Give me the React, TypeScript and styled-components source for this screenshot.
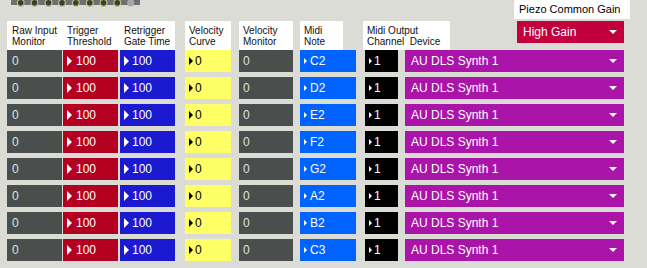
import React from "react";
import styled, { createGlobalStyle } from "styled-components";

const GlobalStyle = createGlobalStyle`
  html, body { margin: 0; padding: 0; background: #dcdcd6; }
  body { font-family: "Liberation Sans", Arial, Helvetica, sans-serif; }
`;

const Page = styled.div`
  width: 647px;
  height: 268px;
  overflow: hidden;
  background: #dcdcd6;
  display: flex;
  flex-direction: column;
`;

const TopBar = styled.div`
  display: flex;
  align-items: flex-start;
  height: 21px;
`;

const LedStrip = styled.div`
  margin-left: 11px;
  width: 129px;
  height: 7px;
  flex-shrink: 0;
  display: flex;
`;

const PiezoLabel = styled.div`
  margin-left: auto;
  margin-right: 17px;
  width: 116px;
  height: 19px;
  background: #ffffff;
  color: #000;
  font-size: 11px;
  line-height: 19px;
  padding-left: 5px;
  box-sizing: border-box;
`;

const HeaderRow = styled.div`
  display: flex;
  align-items: flex-start;
  height: 29px;
`;

const LabelBox = styled.div<{ $ml: number }>`
  margin-left: ${(p) => p.$ml}px;
  height: 29px;
  background: #ffffff;
  display: flex;
`;

const Label = styled.div<{ $w: number; $pl?: number }>`
  width: ${(p) => p.$w}px;
  padding-left: ${(p) => p.$pl ?? 5}px;
  padding-top: 4px;
  box-sizing: border-box;
  font-size: 10px;
  line-height: 11px;
  color: #111;
  white-space: pre;
`;

const GainSelect = styled.div`
  margin-left: auto;
  margin-right: 23px;
  width: 107px;
  height: 22px;
  background: #c2003e;
  color: #fff;
  font-size: 12px;
  display: flex;
  align-items: center;
  padding-left: 6px;
  padding-right: 7px;
  box-sizing: border-box;
`;

const Rows = styled.div`
  display: flex;
  flex-direction: column;
  gap: 5px;
`;

const Row = styled.div`
  display: flex;
  height: 22px;
`;

const Cell = styled.div<{ $w: number; $ml: number; $bg: string; $fg: string; $pl: number; $pr?: number }>`
  width: ${(p) => p.$w}px;
  margin-left: ${(p) => p.$ml}px;
  height: 22px;
  background: ${(p) => p.$bg};
  color: ${(p) => p.$fg};
  padding-left: ${(p) => p.$pl}px;
  padding-right: ${(p) => p.$pr ?? 0}px;
  box-sizing: border-box;
  display: flex;
  align-items: center;
  font-size: 12px;
  white-space: nowrap;
`;

const Arrow = styled.span<{ $w: number; $h: number; $c: string; $gap: number }>`
  display: inline-block;
  width: 0;
  height: 0;
  border-top: ${(p) => p.$h / 2}px solid transparent;
  border-bottom: ${(p) => p.$h / 2}px solid transparent;
  border-left: ${(p) => p.$w}px solid ${(p) => p.$c};
  margin-right: ${(p) => p.$gap}px;
`;

const DownArrow = styled.span`
  margin-left: auto;
  width: 0;
  height: 0;
  border-left: 4px solid transparent;
  border-right: 4px solid transparent;
  border-top: 4px solid #fff;
`;

const Value = styled.span`
  line-height: 14px;
`;

type Col = {
  w: number;
  ml: number;
  bg: string;
  fg: string;
  pl: number;
  pr?: number;
  arrow?: { w: number; h: number; c: string; gap: number };
  value: (i: number) => string;
  dropdown?: boolean;
};

const notes = ["C2", "D2", "E2", "F2", "G2", "A2", "B2", "C3"];

const cols: Col[] = [
  { w: 55, ml: 7, bg: "#4a4e4c", fg: "#dfe2e4", pl: 5, value: () => "0" },
  { w: 55, ml: 1, bg: "#b40020", fg: "#fff", pl: 4, arrow: { w: 5, h: 11, c: "#fff", gap: 4 }, value: () => "100" },
  { w: 55, ml: 2, bg: "#1c1ad0", fg: "#fff", pl: 4, arrow: { w: 5, h: 11, c: "#fff", gap: 3 }, value: () => "100" },
  { w: 46, ml: 10, bg: "#ffff66", fg: "#000", pl: 4, arrow: { w: 4, h: 8, c: "#000", gap: 2 }, value: () => "0" },
  { w: 54, ml: 8, bg: "#4a4e4c", fg: "#dfe2e4", pl: 4, value: () => "0" },
  { w: 56, ml: 7, bg: "#0063ff", fg: "#fff", pl: 4, arrow: { w: 3, h: 7, c: "#fff", gap: 3 }, value: (i) => notes[i] },
  { w: 33, ml: 9, bg: "#000000", fg: "#fff", pl: 4, arrow: { w: 3, h: 7, c: "#fff", gap: 2 }, value: () => "1" },
  { w: 219, ml: 7, bg: "#aa14a8", fg: "#fff", pl: 6, pr: 7, value: () => "AU DLS Synth 1", dropdown: true },
];

const Leds: React.FC = () => {
  const xs = [9.7, 23.5, 37.5, 51, 64.8, 78.8, 92.5, 106.3];
  return (
    <svg width="129" height="7" viewBox="0 0 129 7">
      <rect x="0" y="0" width="129" height="5" fill="#6e6f73" />
      {xs.map((x) => (
        <circle key={x} cx={x} cy={2.8} r={3.4} fill="#3a3c3e" stroke="#b7c46a" strokeWidth={1.2} />
      ))}
      <circle cx={119.7} cy={2.8} r={3.6} fill="#a6a6aa" />
    </svg>
  );
};

export default function App() {
  return (
    <Page>
      <GlobalStyle />
      <TopBar>
        <LedStrip>
          <Leds />
        </LedStrip>
        <PiezoLabel>Piezo Common Gain</PiezoLabel>
      </TopBar>
      <HeaderRow>
        <LabelBox $ml={7}>
          <Label $w={56}>{"Raw Input\nMonitor"}</Label>
          <Label $w={57} $pl={4}>{"Trigger\nThreshold"}</Label>
          <Label $w={55} $pl={4}>{"Retrigger\nGate Time"}</Label>
        </LabelBox>
        <LabelBox $ml={10}>
          <Label $w={46} $pl={4}>{"Velocity\nCurve"}</Label>
        </LabelBox>
        <LabelBox $ml={8}>
          <Label $w={54} $pl={4}>{"Velocity\nMonitor"}</Label>
        </LabelBox>
        <LabelBox $ml={7}>
          <Label $w={43} $pl={4}>{"Midi\nNote"}</Label>
        </LabelBox>
        <LabelBox $ml={20}>
          <Label $w={87} $pl={4}>{"Midi Output\nChannel  Device"}</Label>
        </LabelBox>
        <GainSelect>
          High Gain
          <DownArrow />
        </GainSelect>
      </HeaderRow>
      <Rows>
        {notes.map((_, i) => (
          <Row key={i}>
            {cols.map((c, j) => (
              <Cell key={j} $w={c.w} $ml={c.ml} $bg={c.bg} $fg={c.fg} $pl={c.pl} $pr={c.pr}>
                {c.arrow && <Arrow $w={c.arrow.w} $h={c.arrow.h} $c={c.arrow.c} $gap={c.arrow.gap} />}
                <Value>{c.value(i)}</Value>
                {c.dropdown && <DownArrow />}
              </Cell>
            ))}
          </Row>
        ))}
      </Rows>
    </Page>
  );
}
